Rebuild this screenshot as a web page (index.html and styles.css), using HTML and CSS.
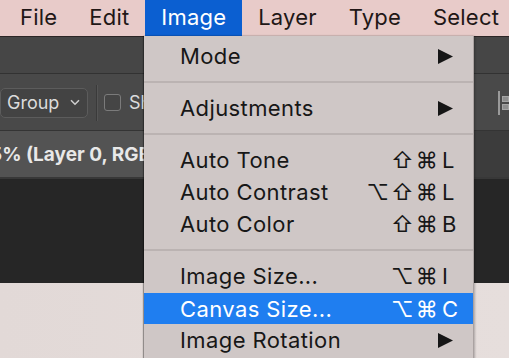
FILE: index.html
```html
<!DOCTYPE html>
<html lang="en">
<head>
<meta charset="utf-8">
<title>Image menu</title>
<link rel="stylesheet" href="styles.css">
</head>
<body>
<div class="screen">
  <nav class="menubar">
    <span class="mb-item">File</span>
    <span class="mb-item">Edit</span>
    <span class="mb-item active">Image</span>
    <span class="mb-item">Layer</span>
    <span class="mb-item">Type</span>
    <span class="mb-item">Select</span>
  </nav>

  <div class="optbar-top"></div>

  <div class="optbar">
    <div class="opt-left">
      <div class="select">
        <span>Group</span>
        <svg class="chev" width="10" height="7" viewBox="0 0 10 7"><path d="M1 1.2 L5 5.2 L9 1.2" fill="none" stroke="#cfcfcf" stroke-width="1.5"/></svg>
      </div>
      <div class="vdivider"></div>
      <div class="check"></div>
      <span class="opt-label">Show Transform Controls</span>
    </div>
    <div class="align-icon">
      <span class="align-bar"></span>
      <span class="align-boxes"><span class="abox"></span><span class="abox"></span></span>
    </div>
  </div>

  <div class="tabbar">
    <div class="tab active"><span class="tab-title">5% (Layer 0, RGB/8) *</span></div>
  </div>

  <div class="canvas-area"></div>
  <div class="doc"></div>

  <div class="menu">
    <div class="mi"><span class="label">Mode</span><svg class="sub" width="15" height="15" viewBox="0 0 15 15"><polygon points="0,0 15,7.5 0,15" fill="#161616"/></svg></div>
    <div class="sep"></div>
    <div class="mi"><span class="label">Adjustments</span><svg class="sub" width="15" height="15" viewBox="0 0 15 15"><polygon points="0,0 15,7.5 0,15" fill="#161616"/></svg></div>
    <div class="sep"></div>
    <div class="mi"><span class="label">Auto Tone</span><span class="keys"><span class="g">⇧</span><span class="g">⌘</span><span class="key">L</span></span></div>
    <div class="mi"><span class="label">Auto Contrast</span><span class="keys"><span class="g">⌥</span><span class="g">⇧</span><span class="g">⌘</span><span class="key">L</span></span></div>
    <div class="mi"><span class="label">Auto Color</span><span class="keys"><span class="g">⇧</span><span class="g">⌘</span><span class="key">B</span></span></div>
    <div class="sep"></div>
    <div class="mi"><span class="label">Image Size...</span><span class="keys"><span class="g">⌥</span><span class="g">⌘</span><span class="key">I</span></span></div>
    <div class="mi selected"><span class="label">Canvas Size...</span><span class="keys"><span class="g">⌥</span><span class="g">⌘</span><span class="key">C</span></span></div>
    <div class="mi"><span class="label">Image Rotation</span><svg class="sub" width="15" height="15" viewBox="0 0 15 15"><polygon points="0,0 15,7.5 0,15" fill="#161616"/></svg></div>
  </div>
</div>
</body>
</html>
```

FILE: styles.css
```css
* { box-sizing: border-box; }

html, body {
  margin: 0;
  padding: 0;
  width: 509px;
  height: 358px;
  overflow: hidden;
  background: #262626;
}

.screen {
  position: relative;
  width: 509px;
  height: 358px;
  overflow: hidden;
  display: flex;
  flex-direction: column;
  font-family: Inter, "Liberation Sans", "DejaVu Sans", sans-serif;
}

/* ---------- macOS menu bar ---------- */
.menubar {
  height: 36px;
  flex: none;
  display: flex;
  padding-left: 4px;
  background: #e8cbc9;
}

.mb-item {
  padding: 0 16px;
  font-size: 22px;
  line-height: 34px;
  letter-spacing: 0.2px;
  color: #211716;
  white-space: nowrap;
}

.mb-item.active {
  background: #0b5fd1;
  color: #ffffff;
}

/* ---------- Photoshop option bars ---------- */
.optbar-top {
  height: 38px;
  flex: none;
  border-top: 1px solid #2c2626;
  border-bottom: 1px solid #323232;
  background: #464646;
}

.optbar {
  height: 57px;
  flex: none;
  display: flex;
  align-items: center;
  padding-top: 1px;
  background: #494949;
  border-bottom: 1px solid #343434;
}

.opt-left {
  width: 144px;
  flex: none;
  display: flex;
  align-items: center;
  overflow: hidden;
  white-space: nowrap;
}

.select {
  width: 88px;
  height: 30px;
  flex: none;
  display: flex;
  align-items: center;
  justify-content: space-between;
  padding: 0 7px 0 6px;
  border: 1px solid #5c5c5c;
  border-radius: 5px;
  background: #434343;
  color: #dcdcdc;
  font-size: 18px;
}

.chev { flex: none; }

.vdivider {
  width: 1px;
  height: 36px;
  flex: none;
  margin-left: 8px;
  background: #3a3a3a;
  box-shadow: 1px 0 0 #555;
}

.check {
  width: 17px;
  height: 17px;
  flex: none;
  margin-left: 7px;
  border: 1.5px solid #7b7b7b;
  border-radius: 3px;
  background: #454545;
}

.opt-label {
  flex: 1 1 auto;
  min-width: 0;
  overflow: hidden;
  margin-left: 8px;
  color: #dcdcdc;
  font-size: 18px;
}

.align-icon {
  margin-left: auto;
  display: flex;
  align-items: center;
  gap: 2px;
  flex: none;
}

.align-bar {
  width: 2px;
  height: 24px;
  background: #9a9a9a;
}

.align-boxes {
  display: flex;
  flex-direction: column;
  gap: 2px;
}

.abox {
  width: 7px;
  height: 6px;
  background: #8e8e8e;
  border: 1px solid #a5a5a5;
}

/* ---------- document tabs ---------- */
.tabbar {
  height: 48px;
  flex: none;
  display: flex;
  background: #3c3c3c;
  border-bottom: 2px solid #383838;
}

.tab.active {
  width: 474px;
  display: flex;
  align-items: center;
  background: #535353;
}

.tab-title {
  width: 144px;
  overflow: hidden;
  color: #e8e8e8;
  font-size: 19px;
  font-weight: 700;
  white-space: nowrap;
  text-indent: -10px;
}

.canvas-area {
  height: 104px;
  flex: none;
  background: #262626;
}

.doc {
  flex: 1;
  background: linear-gradient(90deg, #e2d9d7, #e6dedc);
}

/* ---------- dropdown menu ---------- */
.menu {
  position: absolute;
  left: 144px;
  top: 36px;
  width: 330px;
  height: 340px;
  padding-top: 4px;
  background: #cfc7c6;
  border-right: 1px solid #aaa2a1;
  box-shadow: -1px 0 1px rgba(0, 0, 0, 0.35), 1px 0 2px rgba(0, 0, 0, 0.25);
}

.mi {
  height: 32px;
  display: flex;
  align-items: center;
  justify-content: space-between;
  padding: 0 15px 0 36px;
  color: #171717;
  font-size: 22px;
  letter-spacing: 0.4px;
  white-space: nowrap;
}

.mi.selected {
  background: #1f7ef0;
  color: #ffffff;
  border-top: 1px solid #cfc7c6;
}

.sub {
  margin-right: 5px;
  flex: none;
}

.keys {
  display: flex;
  align-items: center;
  letter-spacing: 0;
}

.g {
  width: 24.5px;
  text-align: center;
  font-size: 22px;
  font-family: Inter, "DejaVu Sans", sans-serif;
}

.key {
  width: 16px;
  margin-left: 3px;
  font-family: Inter, "Liberation Sans", sans-serif;
  font-size: 22px;
}

.sep {
  height: 20px;
  display: flex;
  align-items: center;
}

.sep::before {
  content: "";
  display: block;
  width: 100%;
  height: 2px;
  background: #bbb3b2;
}
```
